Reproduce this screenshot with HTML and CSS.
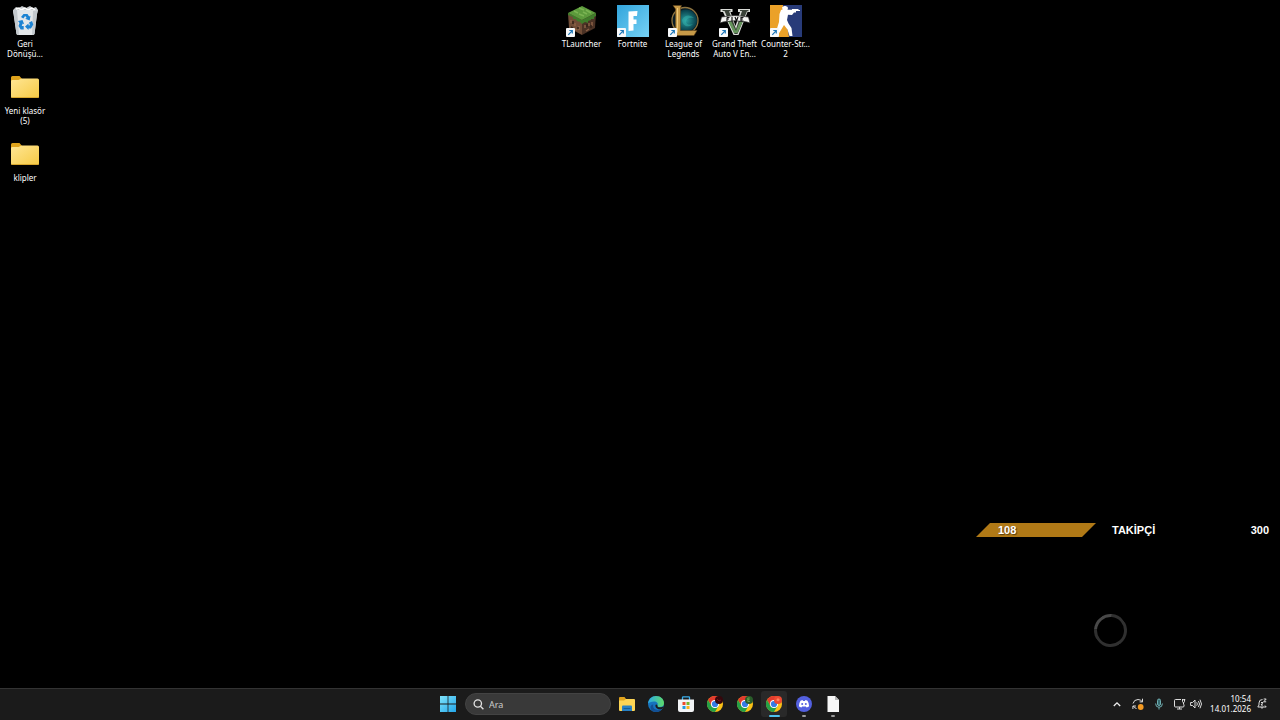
FILE: index.html
```html
<!DOCTYPE html>
<html lang="tr">

<head>
    <meta charset="utf-8">
    <title>Masaüstü</title>
    <link rel="stylesheet" href="styles.css">
</head>

<body>
    <!-- shared symbols -->
    <svg class="symbols" aria-hidden="true">
        <defs>
            <linearGradient id="folderFill" x1="0" y1="0" x2="1" y2="1">
                <stop offset="0" stop-color="#ffe694"/>
                <stop offset="1" stop-color="#f6ca45"/>
            </linearGradient>
            <linearGradient id="winFill" x1="0" y1="0" x2="1" y2="1">
                <stop offset="0" stop-color="#7fe3fb"/>
                <stop offset="1" stop-color="#23a6ea"/>
            </linearGradient>
        </defs>
        <symbol id="folder" viewBox="0 2 32 32">
            <path d="M2 7.500q0-1.500 1.500-1.500h7l2.500 3h-1l-2 4H2z" fill="#dfa31c"/>
            <path d="M2 11q0-1 1.500-1h6l3-1.500h16q1.500 0 1.500 1.500v16.500q0 1.500-1.500 1.500h-25Q2 28 2 26.500z" fill="url(#folderFill)"/>
            <path d="M2.500 27.500h27" stroke="#d9a82e"/>
        </symbol>
        <symbol id="shortcut" viewBox="0 0 9 9">
            <rect width="9" height="9" rx="1" fill="#f6f8fa"/>
            <path d="M2.300 6.800l3.700-3.900M3.300 2.500h3v3" fill="none" stroke="#1b76b8" stroke-width="1.200"/>
        </symbol>
        <symbol id="chrome" viewBox="0 0 16 16">
            <circle cx="8" cy="8" r="8" fill="#fbc116"/>
            <path d="M1.070 4A8 8 0 0 1 14.930 4H8L4.540 10z" fill="#e33b2e"/>
            <path d="M1.070 4A8 8 0 0 0 8 16l3.460-6H4.540z" fill="#25a147"/>
            <circle cx="8" cy="8" r="4" fill="#fff"/>
            <circle cx="8" cy="8" r="3.100" fill="#357be5"/>
        </symbol>
    </svg>

    <main class="desktop">
        <div class="icon-column">
            <button class="icon">
                <svg class="icon-img" viewBox="0 0 32 32">
                    <path d="M4 5l3-3 3 1 3-2 4 2 4-2 3 2 3-1 2 3-1 4H5z" fill="#c9cdd0"/>
                    <path d="M7 4l3-1 2 2 4-2 3 2 4-2 3 2" fill="none" stroke="#fff" stroke-width="1.500"/>
                    <path d="M4 5h24.500l-3 24q-.2 1-1.500 1H9q-1.300 0-1.500-1z" fill="#e3e7ea"/>
                    <path d="M4 5l3.500 24L10 30 8 5zM24 6l-1 24 2.500-1 3-24z" fill="#c3c9ce"/>
                    <g fill="#1c83d3">
                        <path d="M12 12l2.500-3h4l1.700 2.500 1.300-.7-.8 4.700-4.500-1.700 1.500-.7-1.500-2-1.800 2.500z"/>
                        <path d="M9 16l4.500-1 1.700 4.200-1.500-.7-1 2.500h2v3.500h-3L9.500 21l1-3z"/>
                        <path d="M20 17.500l3-1.500 1.300 3.500-2.300 4h-2.500v1.500L16 21.500l3.500-3v1.700H21z"/>
                    </g>
                </svg>
                <span class="icon-label">Geri Dönüşü...</span>
            </button>
            <button class="icon">
                <svg class="icon-img"><use href="#folder"/></svg>
                <span class="icon-label">Yeni klasör (5)</span>
            </button>
            <button class="icon">
                <svg class="icon-img"><use href="#folder"/></svg>
                <span class="icon-label">klipler</span>
            </button>
        </div>

        <div class="icon-row">
            <button class="icon">
                <svg class="icon-img" viewBox="0 0 32 32">
                    <path d="M2 8l14 6v16L3 23z" fill="#704c36"/>
                    <path d="M30 8l-14 6v16l13-7z" fill="#4b3225"/>
                    <path d="M16 1l14 7-14 7L2 8z" fill="#5c9a3c"/>
                    <path d="M2 8l14 7 14-7v3l-2 1v2l-3 0v1l-3 1v2l-3-1-3 2-3-3v1l-3-2v-1l-3 0v-2l-5-2z" fill="#3f7b2a"/>
                    <path d="M8 6l4 2m1-5l5 2m2 0l5 3m-12 1l5 2m-1-4l4 2" stroke="#7ab352" stroke-width="1.500"/>
                    <path d="M5 15v3m4 0v3m-1 3l3 1m2-4v4m6-5v3m4-5v3m3-4v4m-6 5l3-2" stroke="#8a6045" stroke-width="1.500"/>
                    <path d="M7 16v3m5 3v2m-7-2l2 1m14-4v3m4-2v3" stroke="#332219" stroke-width="1.500"/>
                    <use href="#shortcut" y="23" width="9" height="9"/>
                </svg>
                <span class="icon-label">TLauncher</span>
            </button>
            <button class="icon">
                <svg class="icon-img" viewBox="0 0 32 32">
                    <defs>
                        <linearGradient id="fnFill" x1="0" y1="0" x2="1" y2="1">
                            <stop offset="0" stop-color="#32a5dc"/>
                            <stop offset="1" stop-color="#76d2f5"/>
                        </linearGradient>
                    </defs>
                    <rect width="32" height="32" fill="url(#fnFill)"/>
                    <path d="M11.500 6.500l9-.5-.5 5h-3.500v3.500h3v4.500h-3v6.500l-5 .500z" fill="#fff"/>
                    <use href="#shortcut" y="23" width="9" height="9"/>
                </svg>
                <span class="icon-label">Fortnite</span>
            </button>
            <button class="icon">
                <svg class="icon-img" viewBox="0 0 32 32">
                    <defs>
                        <radialGradient id="lolFill">
                            <stop offset="0" stop-color="#2aa0a0"/>
                            <stop offset="1" stop-color="#073b47"/>
                        </radialGradient>
                    </defs>
                    <circle cx="17" cy="15.500" r="13" fill="#0b1c24" stroke="#8e7440" stroke-width="1.300"/>
                    <circle cx="18" cy="15.500" r="11" fill="url(#lolFill)"/>
                    <path d="M14 15c3-6 9-5 12-2-5-1-8 1-8 4 1 3 4 3 7 2-4 4-10 3-11-4z" fill="#35b3ad" opacity=".5"/>
                    <path d="M5 .5h8.500L12.500 3v22.500H29L26 30.500H5.500L7.500 27V4z" fill="#c79a48" stroke="#5d421b" stroke-width=".6"/>
                    <path d="M9.500 3v24.500" stroke="#ecc879"/>
                    <use href="#shortcut" y="23" width="9" height="9"/>
                </svg>
                <span class="icon-label">League of Legends</span>
            </button>
            <button class="icon">
                <svg class="icon-img" viewBox="0 0 32 32">
                    <path d="M1.500 4h12v3h-2l5 14 4.500-14h-2V4H31v3h-2.500l-9 23h-5L4 7H1.500z" fill="#d9dbd6"/>
                    <path d="M3.500 5h8v1.200H10L17 24l6-18h-2V5h8.500v1.200H28L18.500 29h-3L5.500 6h-2z" fill="#3a4238"/>
                    <path d="M8.500 15l6.500 13h3.500l6-13-4 2-3.500 9-5-10z" fill="#64945a"/>
                    <path d="M2.500 12q13.500-3 27 0l1.500 6-3-1q-12-2.500-24 0l-3 1z" fill="#f5f5f2" stroke="#222" stroke-width=".7"/>
                    <path d="M8 12.500v3.500m0-3.500h2.500M8 14h2M13 12v4m3-4l1.500 4 1.500-4m5.500.500H22v3.500h2.500M22 14h2" fill="none" stroke="#161616" stroke-width="1.200"/>
                    <use href="#shortcut" y="23" width="9" height="9"/>
                </svg>
                <span class="icon-label">Grand Theft Auto V En...</span>
            </button>
            <button class="icon">
                <svg class="icon-img" viewBox="0 0 32 32">
                    <rect width="32" height="32" fill="#283b79"/>
                    <path d="M0 0h13l-1 13 5 8 2 11H0z" fill="#eba128"/>
                    <path d="M12 2.500q1-2 3.500-1.500t2.500 2l-.5 1.800H22V4h6.500v.9H30V6h-4v1.500h-2l-2 2.500-4-.2-1 5.200 1.500 3.500 3 4.500 1 8h-3l-2-6.500-3.500-4.500-3 5-4 6.500H3l4-8 2-6.500.5-8 1.500-4 1.500-.5z" fill="#fff"/>
                    <use href="#shortcut" y="23" width="9" height="9"/>
                </svg>
                <span class="icon-label">Counter-Str... 2</span>
            </button>
        </div>

        <div class="goal">
            <span class="goal-bar">108</span>
            <span class="goal-title">TAKİPÇİ</span>
            <span class="goal-target">300</span>
        </div>
        <div class="spinner"></div>
    </main>

    <footer class="taskbar">
        <div class="taskbar-center">
            <button class="start" aria-label="Başlat">
                <svg width="16" height="16" viewBox="0 0 16 16" fill="url(#winFill)">
                    <path d="M0 0h7.600v7.600H0zM8.400 0H16v7.600H8.400zM0 8.400h7.600V16H0zM8.400 8.400H16V16H8.400z"/>
                </svg>
            </button>
            <label class="search">
                <svg width="11" height="11" viewBox="0 0 11 11" fill="none" stroke="#e2e2e2" stroke-width="1.300">
                    <circle cx="4.800" cy="4.500" r="3.700"/>
                    <path d="M7.400 7.300l3 3"/>
                </svg>
                <input type="text" placeholder="Ara" aria-label="Ara">
            </label>
            <nav class="apps">
                <button class="app" aria-label="Dosya Gezgini">
                    <svg width="16" height="16" viewBox="0 0 16 16">
                        <path d="M0 2q0-1 1-1h4.500L7 3v3H0z" fill="#e0a31d"/>
                        <path d="M0 4.500h5L7 3h8q1 0 1 1v10q0 1-1 1H1q-1 0-1-1z" fill="#fbd455"/>
                        <path d="M3 15v-4.500q0-1 1-1h8q1 0 1 1V15z" fill="#2680c4"/>
                        <path d="M4.500 12.500h7" stroke="#145c96"/>
                    </svg>
                </button>
                <button class="app" aria-label="Edge">
                    <svg width="16" height="16" viewBox="0 0 16 16">
                        <defs>
                            <linearGradient id="edgeFill">
                                <stop offset="0" stop-color="#2ba9e7"/>
                                <stop offset="1" stop-color="#5edb67"/>
                            </linearGradient>
                        </defs>
                        <circle cx="8" cy="8" r="8" fill="#1673bd"/>
                        <path d="M0 7.500C.5 3 4 0 8 0c5 0 8 3.500 8 7 0 3-2 4-4.200 4-2 0-2.800-.7-2.300-1.500 1-2-.5-4-3.500-4-3 0-5 1-6 2z" fill="url(#edgeFill)"/>
                        <path d="M5.300 8.500C4 13 8 15.500 14 13c-2 3-6 3.500-8.500 2.500C2 14 1 9 5.300 8.500z" fill="#124f94"/>
                        <path d="M9.500 9.500c-.5 1 .5 1.800 2.500 1.800 1.500 0 2.700-.3 3.500-1 0 1-.7 2-1.500 2.700-4 1-7-1-6.500-4 .2-.9 1.500-.8 2 .5z" fill="#1c1c1c"/>
                    </svg>
                </button>
                <button class="app" aria-label="Microsoft Store">
                    <svg width="16" height="16" viewBox="0 0 16 16">
                        <path d="M4.500 4V1.500q0-.7.7-.7h5.600q.7 0 .7.700V4" fill="none" stroke="#3bb0ed" stroke-width="1.300"/>
                        <path d="M0 3.500h16V14q0 2-2 2H2q-2 0-2-2z" fill="#f2f4f6"/>
                        <path d="M4.500 6h3v3h-3z" fill="#ed4a2c"/>
                        <path d="M8.500 6h3v3h-3z" fill="#77b52b"/>
                        <path d="M4.500 10h3v3h-3z" fill="#2298df"/>
                        <path d="M8.500 10h3v3h-3z" fill="#f8b51c"/>
                    </svg>
                </button>
                <button class="app" aria-label="Chrome">
                    <svg width="16" height="16" viewBox="0 0 16 16">
                        <use href="#chrome"/>
                        <circle cx="12" cy="4" r="4" fill="#35070c"/>
                        <path d="M10 3l2 2 2-1" fill="none" stroke="#760f18"/>
                    </svg>
                </button>
                <button class="app" aria-label="Chrome">
                    <svg width="16" height="16" viewBox="0 0 16 16">
                        <use href="#chrome"/>
                        <circle cx="12" cy="4" r="4" fill="#295d29"/>
                        <path d="M12.800 2h-2v3.500h2M11 3.700h1.500" fill="none" stroke="#65a950"/>
                    </svg>
                </button>
                <button class="app active" aria-label="Chrome">
                    <svg width="16" height="16" viewBox="0 0 16 16">
                        <use href="#chrome"/>
                        <circle cx="12" cy="4" r="4" fill="#ee4a32"/>
                        <circle cx="12" cy="3.700" r="1.500" fill="#ff8260"/>
                    </svg>
                </button>
                <button class="app open" aria-label="Discord">
                    <svg width="16" height="16" viewBox="0 0 16 16">
                        <circle cx="8" cy="8" r="8" fill="#5360df"/>
                        <path d="M4.500 4.700l2-.7.6.9h1.800l.6-.9 2 .7q1.700 2.600 1.600 5.500-1 1-2.500 1.400l-.7-1.100H6.100l-.7 1.100Q3.900 11.200 2.900 10.200 2.800 7.300 4.500 4.700z" fill="#fff"/>
                        <circle cx="6.200" cy="8.100" r="1" fill="#5360df"/>
                        <circle cx="9.800" cy="8.100" r="1" fill="#5360df"/>
                    </svg>
                </button>
                <button class="app open" aria-label="Belge">
                    <svg width="16" height="16" viewBox="0 0 16 16">
                        <path d="M2.500 0h7.500l4 4v12H2.500z" fill="#f7f7f7"/>
                        <path d="M10 0v4h4z" fill="#b5b5b5"/>
                    </svg>
                </button>
            </nav>
        </div>

        <div class="tray">
            <button aria-label="Gizli simgeler">
                <svg width="8" height="12" viewBox="0 0 8 12" fill="none" stroke="#f0f0f0" stroke-width="1.300"><path d="M.8 8L4 4.800 7.200 8"/></svg>
            </button>
            <button aria-label="Güncelleme">
                <svg width="12" height="12" viewBox="0 0 12 12">
                    <path d="M1 5.500Q2 1.500 6 1.500q2.500 0 4.300 2.200M10.500.7v3.200H7.600M4.500 10.500Q2.300 10 1.300 8M.9 11V8h3" fill="none" stroke="#ddd"/>
                    <circle cx="8.700" cy="9" r="2.900" fill="#f39a22"/>
                </svg>
            </button>
            <button aria-label="Mikrofon">
                <svg width="8" height="12" viewBox="0 0 8 12" fill="none" stroke="#6faeb1">
                    <rect x="2.500" y="1" width="3" height="6.500" rx="1.500" fill="#376b70"/>
                    <path d="M.6 5.500q0 3.800 3.400 3.800t3.400-3.800M4 9.300v2.200"/>
                </svg>
            </button>
            <button class="quick" aria-label="Ağ ve ses">
                <svg width="12" height="12" viewBox="0 0 12 12" fill="none" stroke="#ddd">
                    <path d="M7 1.500H1.500q-1 0-1 1V8q0 1 1 1H9q1 0 1-1V6.500M3 11h5M5.500 9v2"/>
                    <path d="M8.500 1v2.500q0 1 1 1t1-1V1M8 1.700h3.300M9.500 4.500v2" />
                </svg>
                <svg width="12" height="12" viewBox="0 0 12 12" fill="none" stroke="#ddd">
                    <path d="M.6 4.500h2L5 2v8L2.600 7.500h-2zM6.700 4.300q1.300 1.700 0 3.400M8.400 3q2.300 3 0 6M10 1.700q3 4.300 0 8.600"/>
                </svg>
            </button>
            <div class="clock">
                <time>10:54</time>
                <time>14.01.2026</time>
            </div>
            <button aria-label="Bildirimler">
                <svg width="10" height="12" viewBox="0 0 10 12" fill="none" stroke="#ddd">
                    <path d="M5.500 1.500Q2 1.500 2 5v2L.8 9h8.400L8 7.500M3.700 9.200q1.300 2.200 2.600 0M4 4.500h2L4 7h2M6.700 1h2.500L6.700 3.800h2.500"/>
                </svg>
            </button>
        </div>
    </footer>
</body>

</html>
```
FILE: styles.css
```css
* {
    box-sizing: border-box;
}

body {
    margin: 0;
    min-height: 100vh;
    display: flex;
    flex-direction: column;
    background-color: #000;
    color: #fff;
    font-family: "Noto Sans", "Open Sans", sans-serif;
    font-size: 8px;
    line-height: 10px;
}

button {
    margin: 0;
    padding: 0;
    border: none;
    background: none;
    color: inherit;
    font: inherit;
}

svg {
    display: block;
}

.symbols {
    position: absolute;
    width: 0;
    height: 0;
}

/* desktop */
.desktop {
    position: relative;
    flex: 1;
}

.icon-column {
    display: flex;
    flex-direction: column;
    width: 50px;
}

.icon-row {
    position: absolute;
    top: 0;
    left: 556px;
    display: flex;
}

.icon {
    display: flex;
    flex-direction: column;
    align-items: center;
    gap: 2px;
    width: 50px;
    height: 67px;
    padding-top: 5px;
}

.icon-row .icon {
    width: 51px;
}

.icon-img {
    width: 32px;
    height: 32px;
}

.icon-label {
    width: 100%;
    text-align: center;
}

/* follower goal */
.goal {
    position: absolute;
    right: 11px;
    bottom: 151px;
    width: 293px;
    display: flex;
    gap: 16px;
    font-family: "Liberation Sans", Arial, sans-serif;
    font-size: 11px;
    font-weight: bold;
    line-height: 14px;
}

.goal-bar {
    width: 120px;
    padding-left: 22px;
    background-color: #b07916;
    clip-path: polygon(14px 0, 100% 0, 106px 100%, 0 100%);
    text-shadow: 1px 1px 1px rgba(0, 0, 0, 0.5);
}

.goal-target {
    margin-left: auto;
}

.spinner {
    position: absolute;
    right: 153px;
    bottom: 41px;
    width: 33px;
    height: 33px;
    border: 3px solid #303030;
    border-top-color: #484848;
    border-radius: 50%;
    transform: rotate(-40deg);
}

/* taskbar */
.taskbar {
    display: grid;
    grid-template-columns: 1fr auto 1fr;
    height: 32px;
    background-color: #1b1b1b;
    box-shadow: inset 0 1px #333;
}

.taskbar-center {
    grid-column: 2;
    display: flex;
    align-items: center;
    gap: 3px;
}

.start {
    width: 28px;
    display: flex;
    justify-content: center;
}

.search {
    display: flex;
    align-items: center;
    gap: 5px;
    width: 146px;
    height: 22px;
    padding: 0 7px;
    border: 1px solid #434343;
    border-radius: 11px;
    background-color: #393939;
}

.search input {
    flex: 1;
    min-width: 0;
    padding: 0;
    border: none;
    outline: none;
    background: none;
    color: #fff;
    font-family: inherit;
    font-size: 9px;
}

.search input::placeholder {
    color: #ccc;
}

.apps {
    display: flex;
    justify-content: space-between;
    width: 232px;
}

.app {
    position: relative;
    display: flex;
    align-items: center;
    justify-content: center;
    width: 26px;
    height: 26px;
    border-radius: 3px;
}

.app.active {
    background-color: #292929;
}

.app.open::after,
.app.active::after {
    content: "";
    position: absolute;
    bottom: 0;
    width: 4px;
    height: 2px;
    border-radius: 1px;
    background-color: #999;
}

.app.active::after {
    width: 11px;
    background-color: #4cc2ee;
}

/* tray */
.tray {
    display: flex;
    align-items: center;
    justify-content: flex-end;
    gap: 11px;
    padding-right: 13px;
}

.quick {
    display: flex;
    gap: 4px;
}

.clock {
    display: flex;
    flex-direction: column;
    margin-left: -3px;
    text-align: right;
}

.clock + button {
    margin-left: -5px;
}
```
